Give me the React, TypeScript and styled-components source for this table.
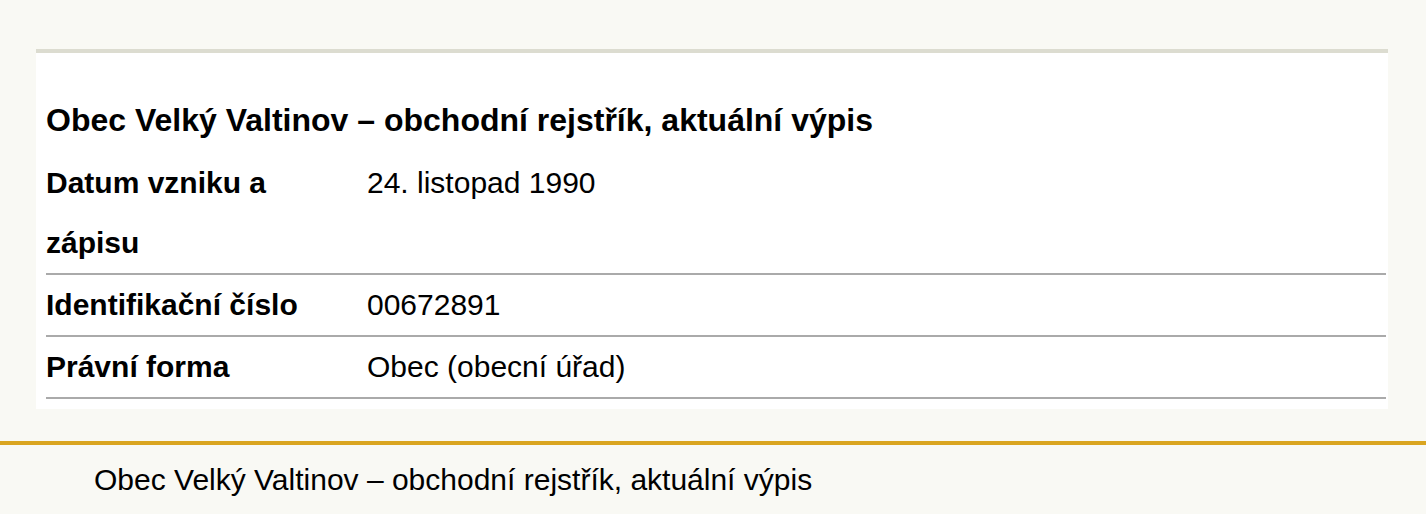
import React from "react";
import styled, { createGlobalStyle } from "styled-components";

const Global = createGlobalStyle`
  html, body {
    margin: 0;
    padding: 0;
    background: #f9f9f4;
    font-family: "Liberation Sans", Arial, sans-serif;
    color: #000;
  }
`;

const Page = styled.div`
  padding-top: 49px;
`;

const Card = styled.section`
  margin: 0 38px 0 36px;
  background: #ffffff;
  border-top: 4px solid #dcdcd0;
  padding: 37px 2px 10px 10px;
`;

const Heading = styled.h2`
  margin: 0 0 3px 0;
  font-size: 32px;
  font-weight: bold;
  line-height: 60px;
`;

const Table = styled.table`
  width: 100%;
  border-collapse: collapse;
  font-size: 30px;
  line-height: 60px;
`;

const Row = styled.tr`
  border-bottom: 2px solid #aaaaaa;
`;

const Label = styled.th`
  width: 311px;
  padding: 0 10px 0 0;
  text-align: left;
  vertical-align: top;
  font-weight: bold;
`;

const Value = styled.td`
  padding: 0;
  vertical-align: top;
`;

const Footer = styled.footer`
  margin-top: 32px;
  border-top: 4px solid #daa520;
  padding: 15px 0 0 94px;
  font-size: 30px;
  line-height: 40px;
`;

const rows: [string, string][] = [
  ["Datum vzniku a zápisu", "24. listopad 1990"],
  ["Identifikační číslo", "00672891"],
  ["Právní forma", "Obec (obecní úřad)"],
];

export default function App() {
  return (
    <>
      <Global />
      <Page>
        <Card>
          <Heading>Obec Velký Valtinov – obchodní rejstřík, aktuální výpis</Heading>
          <Table>
            <tbody>
              {rows.map(([k, v]) => (
                <Row key={k}>
                  <Label>{k}</Label>
                  <Value>{v}</Value>
                </Row>
              ))}
            </tbody>
          </Table>
        </Card>
        <Footer>Obec Velký Valtinov – obchodní rejstřík, aktuální výpis</Footer>
      </Page>
    </>
  );
}
